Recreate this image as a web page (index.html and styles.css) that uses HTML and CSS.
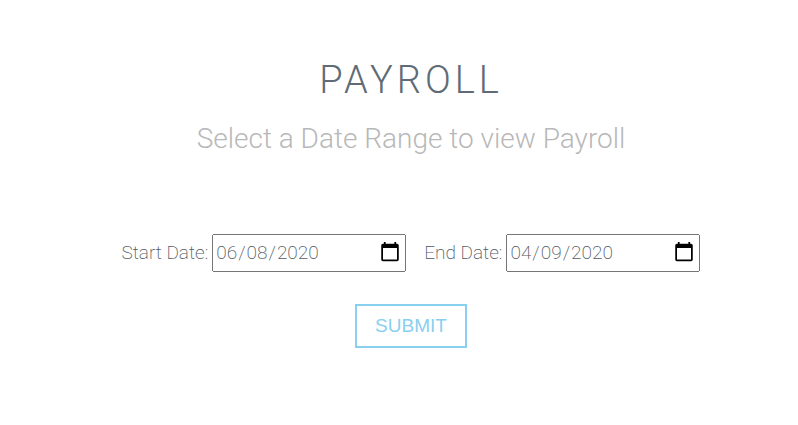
FILE: index.html
```html
<!DOCTYPE html>
<html lang="en">
<head>
<meta charset="utf-8">
<title>Payroll</title>
<link rel="stylesheet" href="styles.css">
</head>
<body>
<main class="payroll">
  <h1 class="title">Payroll</h1>
  <p class="subtitle">Select a Date Range to view Payroll</p>
  <form class="range-form">
    <div class="fields">
      <div class="field">
        <label for="start">Start Date:</label>
        <input class="date" type="date" id="start" value="2020-06-08">
      </div>
      <div class="field">
        <label for="end">End Date:</label>
        <input class="date" type="date" id="end" value="2020-04-09">
      </div>
    </div>
    <button class="submit" type="submit">Submit</button>
  </form>
</main>
</body>
</html>
```

FILE: styles.css
```css
body {
  margin: 0;
  background: #fff;
  color: #4f5a64;
  font-family: Roboto, sans-serif;
  font-size: 19px;
  font-weight: 200;
}

.payroll {
  padding: 56px 0 0 24px;
  text-align: center;
}

.title {
  margin: 0;
  color: #5f6b76;
  font-size: 38px;
  line-height: 48px;
  font-weight: 300;
  letter-spacing: 4px;
  text-transform: uppercase;
}

.subtitle {
  margin: 16px 0 0;
  color: #b8b8b8;
  font-size: 28px;
  line-height: 38px;
  font-weight: 300;
}

.range-form {
  display: flex;
  flex-direction: column;
  align-items: center;
  gap: 32px;
  margin-top: 76px;
}

.fields {
  display: flex;
  gap: 18px;
}

.field {
  display: flex;
  align-items: center;
  gap: 4px;
  line-height: 22px;
}

.date {
  box-sizing: border-box;
  width: 194px;
  height: 38px;
  margin: 0;
  padding: 0 3px 0 1px;
  color: inherit;
  font: inherit;
}

.date::-webkit-calendar-picker-indicator {
  width: 22px;
  height: 22px;
  padding: 0 0 2px;
}

.submit {
  height: 44px;
  padding: 0 18px;
  border: 2px solid #89cff0;
  background: transparent;
  color: #89cff0;
  font-family: "Liberation Sans", sans-serif;
  font-size: 19px;
  text-transform: uppercase;
}
```
